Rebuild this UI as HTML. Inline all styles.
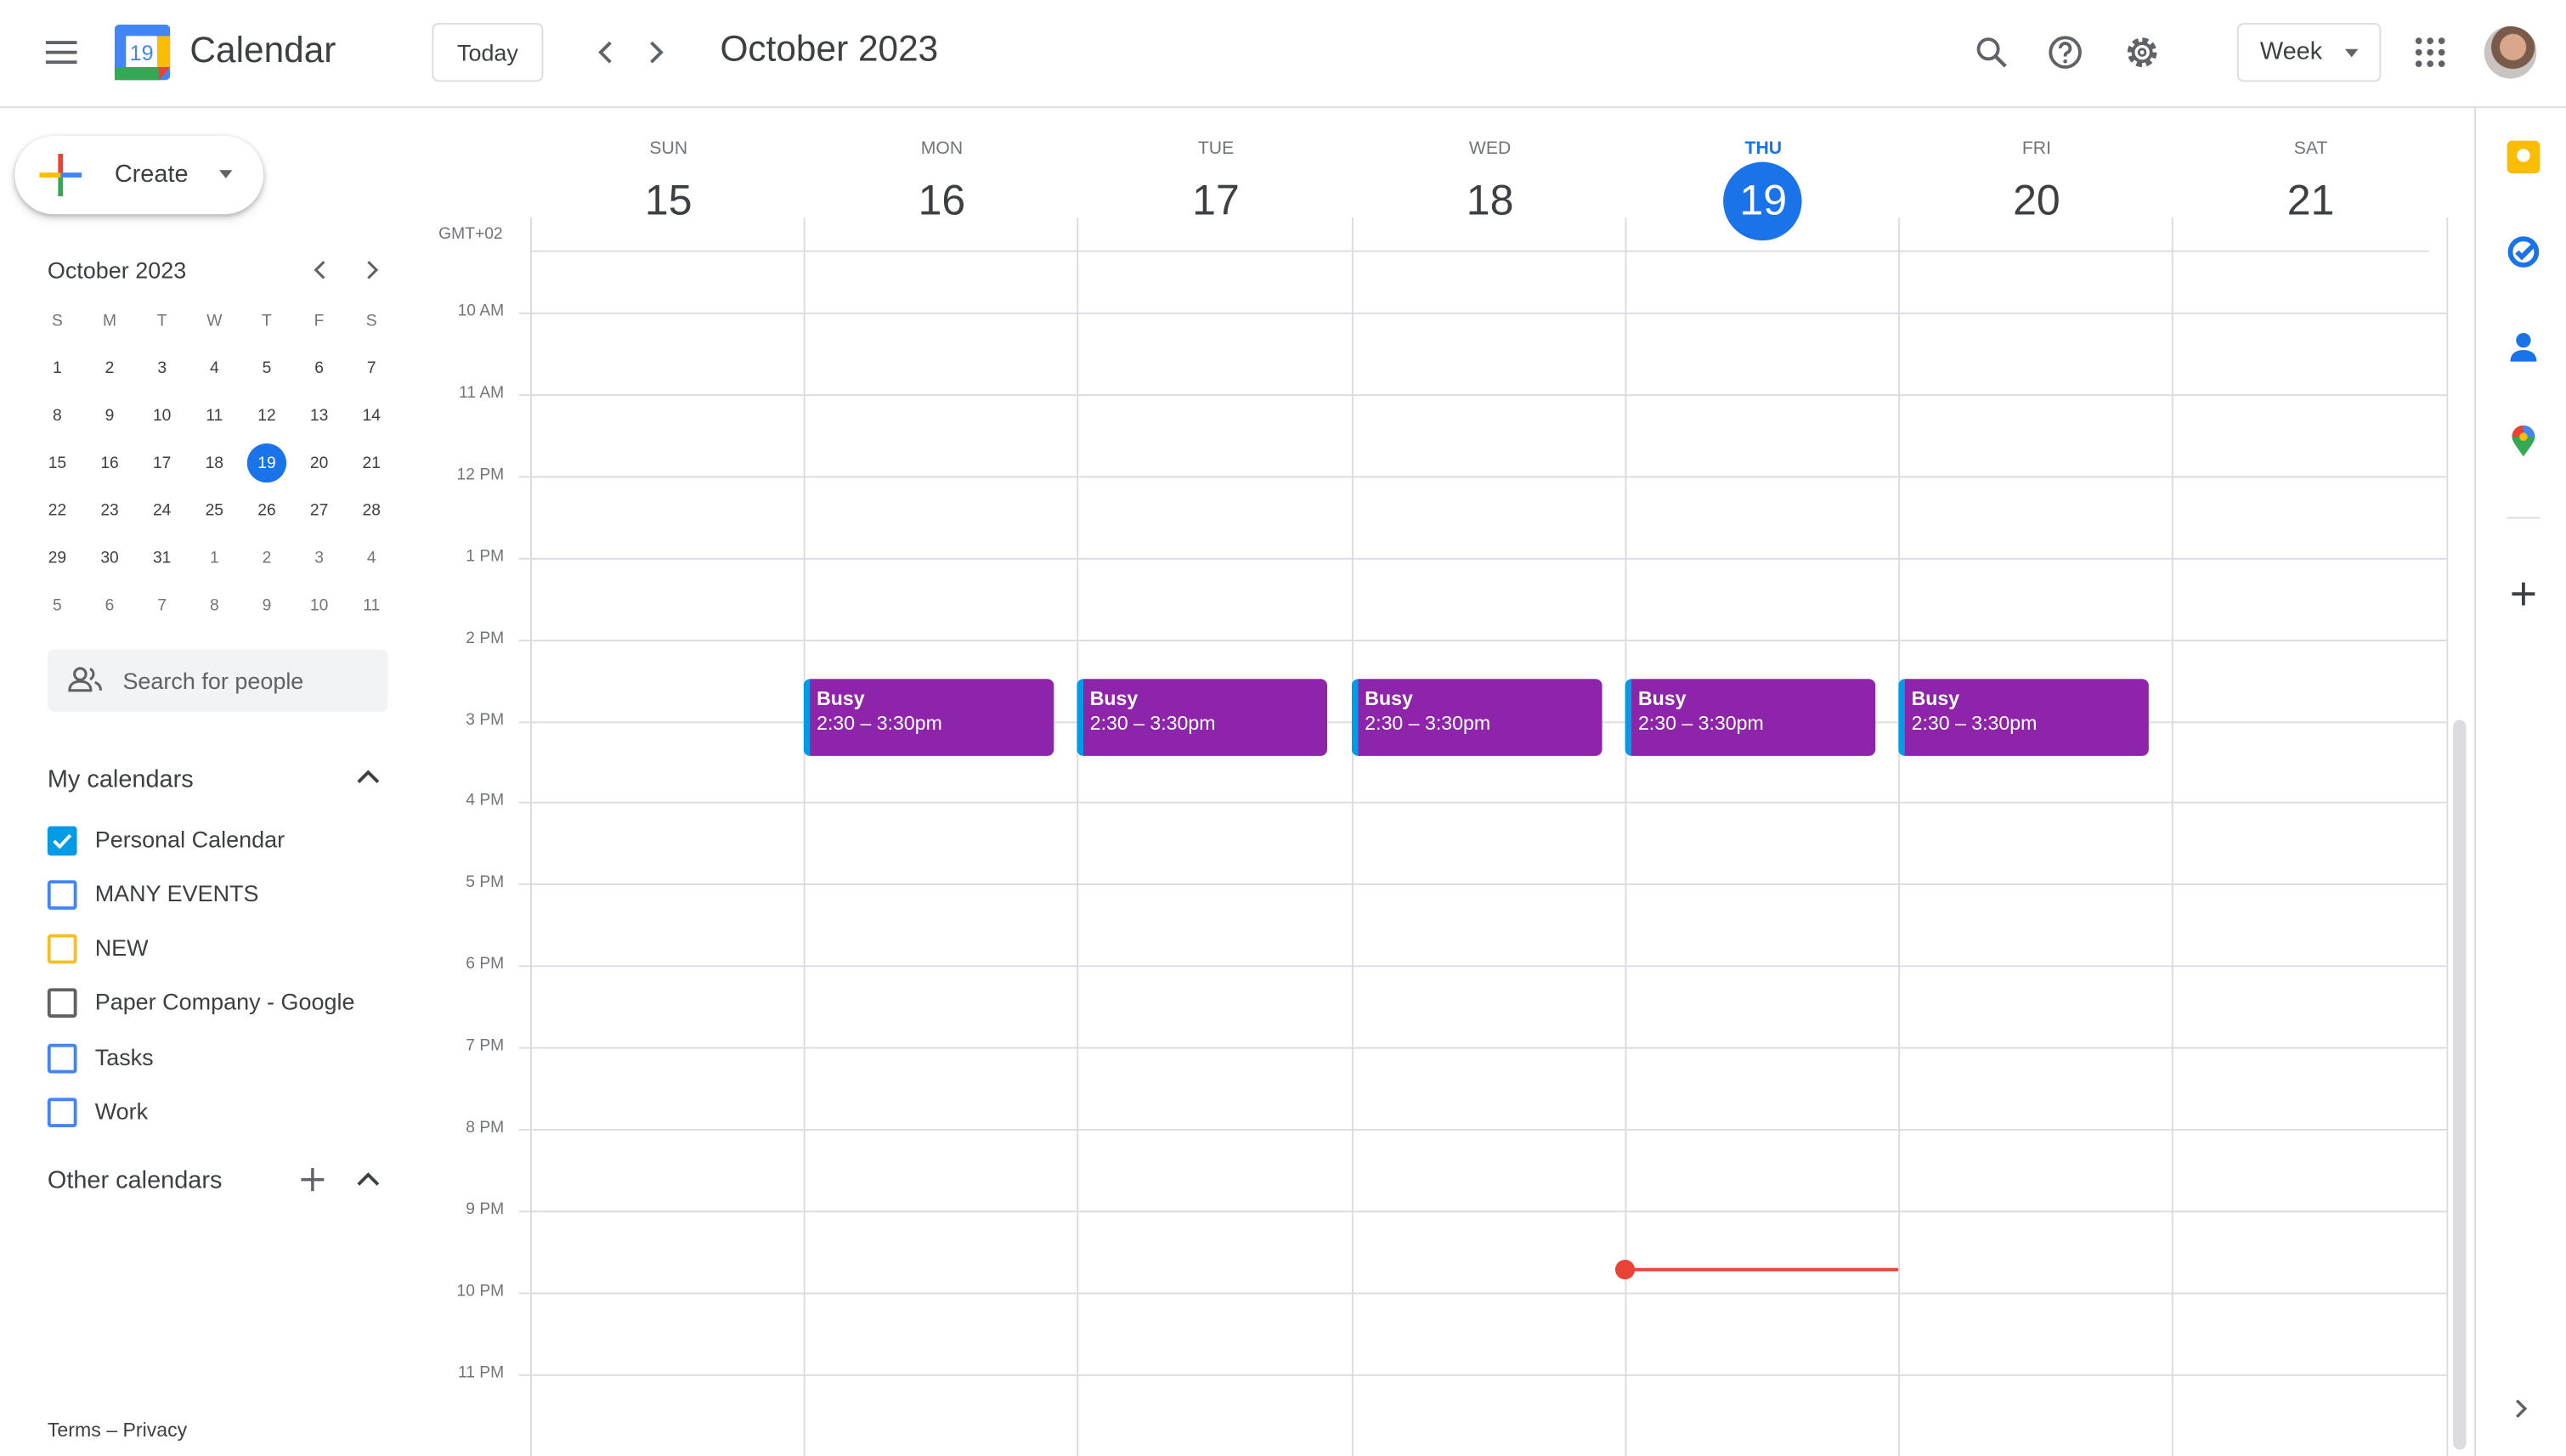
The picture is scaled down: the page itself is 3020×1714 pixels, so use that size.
<!DOCTYPE html>
<html><head><meta charset="utf-8"><style>
*{margin:0;padding:0;box-sizing:border-box}
html,body{width:3020px;height:1714px;overflow:hidden;background:#fff}
#s{position:absolute;left:0;top:0;width:1568px;height:890px;transform:scale(1.92602);transform-origin:0 0;font-family:"Liberation Sans",sans-serif;color:#3c4043}
.a{position:absolute}
.c{position:absolute;transform:translateX(-50%);text-align:center;white-space:nowrap}
.hl{position:absolute;left:317px;width:1178px;height:1px;background:#dadce0}
.vl{position:absolute;top:133px;width:1px;height:757px;background:#dadce0}
.tl{position:absolute;right:1260px;font-size:10px;color:#70757a;text-align:right}
.ev{position:absolute;top:415px;width:153px;height:47px;background:#8e24aa;border-left:4px solid #039be5;border-radius:4px;color:#fff;font-size:12px;padding:5px 0 0 4px;line-height:15px}
.mc{position:absolute;font-size:10px;color:#3c4043;transform:translateX(-50%);width:24px;text-align:center}
.cb{position:absolute;left:29px;width:18px;height:18px;border:2px solid;border-radius:2px}
.cl{position:absolute;left:58px;font-size:14px;color:#3c4043}
</style></head><body><div id="s">
<!-- header -->
<div class="a" style="left:28px;top:25px;width:19px;height:2px;background:#5f6368;box-shadow:0 6px 0 #5f6368,0 12px 0 #5f6368"></div>
<svg class="a" style="left:70px;top:15px" width="34" height="34" viewBox="0 0 34 34"><rect x="0" y="0" width="34" height="34" rx="3" fill="#4285f4"/><rect x="26" y="7" width="8" height="20" fill="#fbbc04"/><rect x="0" y="26" width="27" height="8" fill="#34a853"/><path d="M27 26h7l-7 8z" fill="#ea4335"/><rect x="7" y="7" width="19" height="19" fill="#fff"/><text x="16.5" y="22" font-size="13" text-anchor="middle" fill="#4285f4" font-family="Liberation Sans">19</text></svg>
<div class="a" style="left:116px;top:18px;font-size:22px;color:#3c4043">Calendar</div>
<div class="a" style="left:264px;top:14px;width:68px;height:36px;border:1px solid #dadce0;border-radius:4px;font-size:14px;line-height:34px;text-align:center;color:#3c4043">Today</div>
<svg class="a" style="left:360px;top:22px" width="52" height="20"><path d="M13 4l-6 6 6 6M38 4l6 6-6 6" stroke="#5f6368" stroke-width="2" fill="none"/></svg>
<div class="a" style="left:440px;top:17px;font-size:22px;color:#3c4043">October 2023</div>
<svg class="a" style="left:1205px;top:20px" width="24" height="24"><circle cx="10" cy="10" r="6" stroke="#5f6368" stroke-width="2" fill="none"/><path d="M14.5 14.5l6 6" stroke="#5f6368" stroke-width="2.2"/></svg>
<svg class="a" style="left:1250px;top:20px" width="24" height="24"><circle cx="12" cy="12" r="9" stroke="#5f6368" stroke-width="2" fill="none"/><path d="M9 9.5a3 3 0 1 1 4 2.8c-1 .5-1 1-1 2.2" stroke="#5f6368" stroke-width="2" fill="none"/><circle cx="12" cy="17.5" r="1.2" fill="#5f6368"/></svg>
<svg class="a" style="left:1297px;top:20px" width="24" height="24"><circle cx="12" cy="12" r="7.5" stroke="#5f6368" stroke-width="3" fill="none" stroke-dasharray="3.5 2.4"/><circle cx="12" cy="12" r="5.5" stroke="#5f6368" stroke-width="2" fill="none"/><circle cx="12" cy="12" r="2" fill="none" stroke="#5f6368" stroke-width="1.5"/></svg>
<div class="a" style="left:1367px;top:14px;width:88px;height:36px;border:1px solid #dadce0;border-radius:4px;font-size:15px;line-height:34px;padding-left:13px;color:#3c4043">Week</div>
<div class="a" style="left:1433px;top:30px;border:4px solid transparent;border-top:5px solid #5f6368"></div>
<svg class="a" style="left:1475px;top:22px" width="20" height="20"><g fill="#5f6368"><circle cx="3" cy="3" r="2"/><circle cx="10" cy="3" r="2"/><circle cx="17" cy="3" r="2"/><circle cx="3" cy="10" r="2"/><circle cx="10" cy="10" r="2"/><circle cx="17" cy="10" r="2"/><circle cx="3" cy="17" r="2"/><circle cx="10" cy="17" r="2"/><circle cx="17" cy="17" r="2"/></g></svg>
<div class="a" style="left:1518px;top:16px;width:32px;height:32px;border-radius:50%;background:radial-gradient(circle at 55% 40%,#d9a88a 0 30%,#7a5a4a 32% 50%,#c9c4c0 52%)"></div>
<div class="a" style="left:0;top:65px;width:1568px;height:1px;background:#dadce0"></div>
<!-- left -->
<div class="a" style="left:9px;top:83px;width:152px;height:48px;border-radius:24px;background:#fff;box-shadow:0 1px 3px rgba(60,64,67,.35),0 3px 6px rgba(60,64,67,.15)"></div>
<svg class="a" style="left:24px;top:94px" width="26" height="26"><rect x="11.5" y="0" width="3" height="13" fill="#ea4335"/><rect x="11.5" y="13" width="3" height="13" fill="#34a853"/><rect x="0" y="11.5" width="13" height="3" fill="#fbbc04"/><rect x="13" y="11.5" width="13" height="3" fill="#4285f4"/></svg>
<div class="a" style="left:70px;top:98px;font-size:15px;color:#3c4043">Create</div>
<div class="a" style="left:134px;top:104px;border:4px solid transparent;border-top:5px solid #5f6368"></div>
<div class="a" style="left:29px;top:157px;font-size:14px;color:#3c4043">October 2023</div>
<svg class="a" style="left:188px;top:158px" width="48" height="14"><path d="M10 2l-5 5 5 5M37 2l5 5-5 5" stroke="#5f6368" stroke-width="1.6" fill="none"/></svg>
<div class="a" style="left:151px;top:271px;width:24px;height:24px;border-radius:50%;background:#1a73e8"></div>
<div id="mini"></div>
<div class="a" style="left:29px;top:397px;width:208px;height:38px;background:#f1f3f4;border-radius:4px"></div>
<svg class="a" style="left:41px;top:406px" width="22" height="18"><circle cx="8" cy="6" r="3.5" stroke="#5f6368" stroke-width="1.6" fill="none"/><path d="M1.5 16c0-4 3-5.5 6.5-5.5s6.5 1.5 6.5 5.5z" stroke="#5f6368" stroke-width="1.6" fill="none"/><path d="M14 2.8a3.5 3.5 0 0 1 0 6.4M17 11c2 .8 3.5 2 3.5 5" stroke="#5f6368" stroke-width="1.6" fill="none"/></svg>
<div class="a" style="left:75px;top:408px;font-size:14px;color:#5f6368">Search for people</div>
<div class="a" style="left:29px;top:468px;font-size:15px;color:#3c4043">My calendars</div>
<svg class="a" style="left:218px;top:470px" width="14" height="10"><path d="M1 8l6-6 6 6" stroke="#3c4043" stroke-width="2" fill="none"/></svg>
<div class="cb" style="top:505px;border-color:#039be5;background:#039be5"></div>
<svg class="a" style="left:31px;top:507px" width="14" height="14"><path d="M2 7l3.5 3.5L12 3.5" stroke="#fff" stroke-width="2" fill="none"/></svg>
<div class="cl" style="top:505px">Personal Calendar</div>
<div class="cb" style="top:538px;border-color:#4285f4"></div><div class="cl" style="top:538px">MANY EVENTS</div>
<div class="cb" style="top:571px;border-color:#f6bf26"></div><div class="cl" style="top:571px">NEW</div>
<div class="cb" style="top:604px;border-color:#616161"></div><div class="cl" style="top:604px">Paper Company - Google</div>
<div class="cb" style="top:638px;border-color:#4285f4"></div><div class="cl" style="top:638px">Tasks</div>
<div class="cb" style="top:671px;border-color:#4285f4"></div><div class="cl" style="top:671px">Work</div>
<div class="a" style="left:29px;top:713px;font-size:15px;color:#3c4043">Other calendars</div>
<svg class="a" style="left:183px;top:713px" width="16" height="16"><path d="M8 1v14M1 8h14" stroke="#5f6368" stroke-width="1.8"/></svg>
<svg class="a" style="left:218px;top:716px" width="14" height="10"><path d="M1 8l6-6 6 6" stroke="#3c4043" stroke-width="2" fill="none"/></svg>
<div class="a" style="left:29px;top:867px;font-size:12px;color:#3c4043">Terms – Privacy</div>
<!-- grid -->
<div class="a" style="left:268px;top:138px;font-size:10px;color:#70757a">GMT+02</div>
<div id="grid"></div>
<div class="a" style="left:1053px;top:99px;width:48px;height:48px;border-radius:50%;background:#1a73e8"></div>
<div class="ev" style="left:491px"><b style="font-weight:bold">Busy</b><br>2:30 – 3:30pm</div>
<div class="ev" style="left:658px"><b>Busy</b><br>2:30 – 3:30pm</div>
<div class="ev" style="left:826px"><b>Busy</b><br>2:30 – 3:30pm</div>
<div class="ev" style="left:993px"><b>Busy</b><br>2:30 – 3:30pm</div>
<div class="ev" style="left:1160px"><b>Busy</b><br>2:30 – 3:30pm</div>
<div class="a" style="left:993px;top:775px;width:167px;height:2px;background:#ea4335"></div>
<div class="a" style="left:987px;top:770px;width:12px;height:12px;border-radius:50%;background:#ea4335"></div>
<div class="a" style="left:1499px;top:440px;width:8px;height:446px;border-radius:4px;background:#dadce0"></div>
<!-- right bar -->
<div class="a" style="left:1512px;top:66px;width:1px;height:824px;background:#dadce0"></div>
<div class="a" style="left:1532px;top:86px;width:20px;height:20px;border-radius:3px;background:#fbbc04"></div>
<div class="a" style="left:1538px;top:91px;width:8px;height:8px;border-radius:50%;background:#fff"></div>
<svg class="a" style="left:1532px;top:144px" width="20" height="20"><circle cx="10" cy="10" r="8" stroke="#1a73e8" stroke-width="3" fill="none"/><path d="M6 10l3 3 8-8" stroke="#1a73e8" stroke-width="3" fill="none"/></svg>
<svg class="a" style="left:1533px;top:202px" width="18" height="20"><circle cx="9" cy="6" r="4.5" fill="#1a73e8"/><path d="M1 19c0-5 3.5-7 8-7s8 2 8 7z" fill="#1a73e8"/></svg>
<svg class="a" style="left:1534px;top:260px" width="16" height="20"><path d="M8 19C3 12 1 9.5 1 7a7 7 0 0 1 14 0c0 2.5-2 5-7 12z" fill="#34a853"/><path d="M1 7a7 7 0 0 1 7-7v7z" fill="#ea4335"/><path d="M8 0a7 7 0 0 1 7 7H8z" fill="#4285f4"/><circle cx="8" cy="7" r="2.5" fill="#fbbc04"/></svg>
<div class="a" style="left:1532px;top:316px;width:20px;height:1px;background:#dadce0"></div>
<svg class="a" style="left:1534px;top:355px" width="16" height="16"><path d="M8 1v14M1 8h14" stroke="#3c4043" stroke-width="2"/></svg>
<svg class="a" style="left:1535px;top:854px" width="12" height="14"><path d="M3 2l5 5-5 5" stroke="#5f6368" stroke-width="1.8" fill="none"/></svg>
</div>
<script>
var g='',cols=[324,491,658,826,993,1160,1327,1495];
for(var i=0;i<8;i++)g+='<div class="vl" style="left:'+cols[i]+'px"></div>';
g+='<div class="hl" style="top:153px;left:324px;width:1160px"></div>';
var hrs=['10 AM','11 AM','12 PM','1 PM','2 PM','3 PM','4 PM','5 PM','6 PM','7 PM','8 PM','9 PM','10 PM','11 PM'];
for(var i=0;i<14;i++){var y=191+i*49.9;g+='<div class="hl" style="top:'+y+'px"></div><div class="tl" style="top:'+(y-6)+'px">'+hrs[i]+'</div>';}
var dn=['SUN','MON','TUE','WED','THU','FRI','SAT'];
for(var i=0;i<7;i++){var x=(cols[i]+cols[i+1])/2+1,cur=i==4;
g+='<div class="c" style="left:'+x+'px;top:85px;font-size:11px;font-weight:'+(cur?'bold':'normal')+';color:'+(cur?'#1a73e8':'#70757a')+'">'+dn[i]+'</div>';
g+='<div class="c" style="left:'+x+'px;top:107px;font-size:26px;z-index:2;color:'+(cur?'#fff':'#3c4043')+'">'+(15+i)+'</div>';}
document.getElementById('grid').outerHTML=g;
var m='',wd='SMTWTFS';
for(var j=0;j<7;j++)m+='<div class="mc" style="left:'+(35+j*32)+'px;top:191px;color:#70757a">'+wd[j]+'</div>';
var d=[1,2,3,4,5,6,7,8,9,10,11,12,13,14,15,16,17,18,19,20,21,22,23,24,25,26,27,28,29,30,31,1,2,3,4,5,6,7,8,9,10,11];
for(var k=0;k<42;k++){var r=Math.floor(k/7),c=k%7;m+='<div class="mc" style="left:'+(35+c*32)+'px;top:'+(220+r*29)+'px;'+(k==18?'color:#fff;':'')+(k>=31?'color:#70757a':'')+'">'+d[k]+'</div>';}
document.getElementById('mini').outerHTML=m;
</script>
</body></html>
